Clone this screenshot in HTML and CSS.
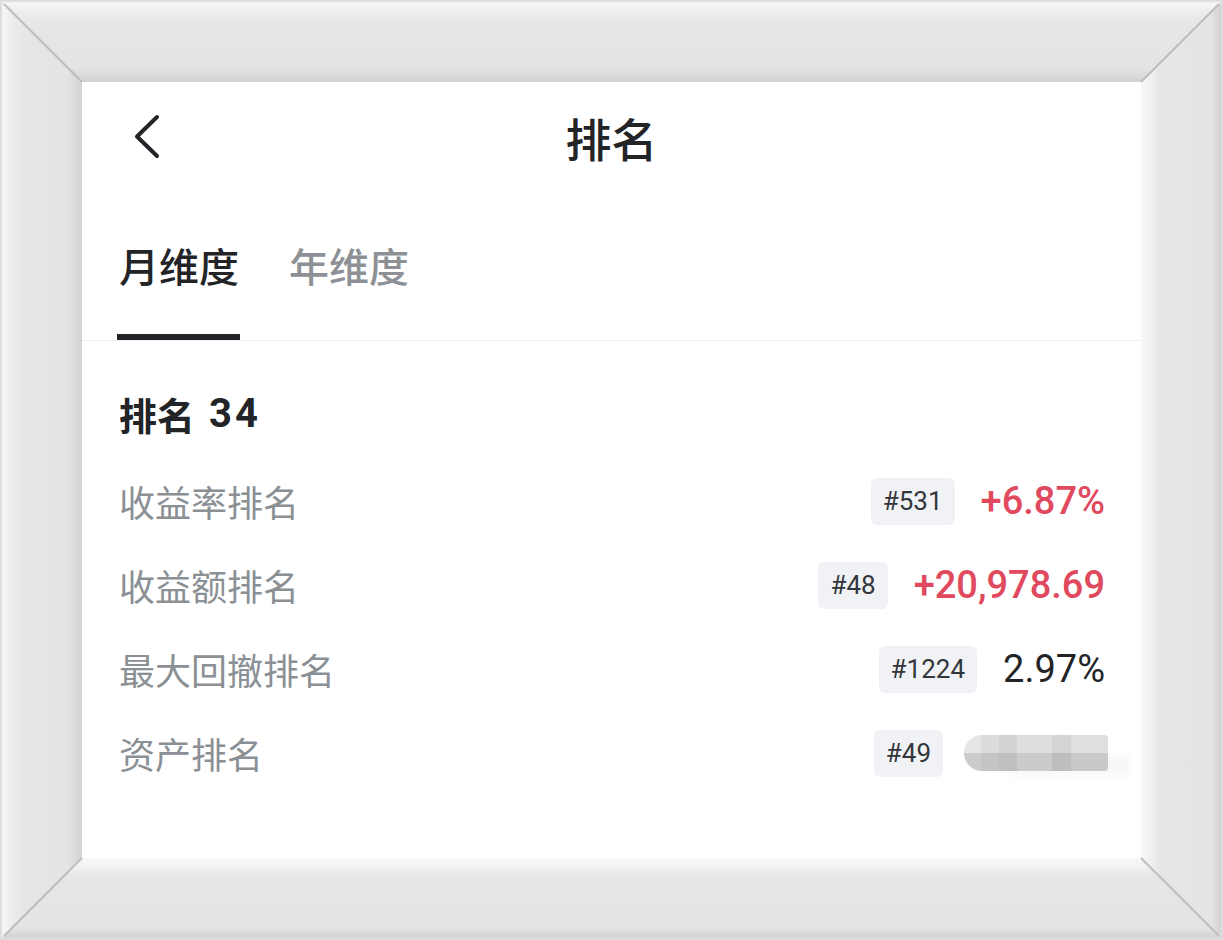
FILE: index.html
```html
<!DOCTYPE html>
<html lang="zh-CN">
<head>
<meta charset="utf-8">
<title>排名</title>
<link rel="stylesheet" href="styles.css">
</head>
<body>
<div class="frame">
  <svg class="frame-bg" width="1223" height="940" viewBox="0 0 1223 940" aria-hidden="true">
    <defs>
      <linearGradient id="gTop" gradientUnits="userSpaceOnUse" x1="0" y1="0" x2="0" y2="82">
        <stop offset="0" stop-color="#d6d6d6"/>
        <stop offset="0.04" stop-color="#f6f6f6"/>
        <stop offset="0.16" stop-color="#ececec"/>
        <stop offset="0.3" stop-color="#e6e6e6"/>
        <stop offset="0.82" stop-color="#e4e4e4"/>
        <stop offset="0.97" stop-color="#d6d6d6"/>
        <stop offset="1" stop-color="#d2d2d2"/>
      </linearGradient>
      <linearGradient id="gLeft" gradientUnits="userSpaceOnUse" x1="0" y1="0" x2="82" y2="0">
        <stop offset="0" stop-color="#d6d6d6"/>
        <stop offset="0.04" stop-color="#f6f6f6"/>
        <stop offset="0.16" stop-color="#ececec"/>
        <stop offset="0.3" stop-color="#e6e6e6"/>
        <stop offset="0.82" stop-color="#e4e4e4"/>
        <stop offset="0.97" stop-color="#d6d6d6"/>
        <stop offset="1" stop-color="#d2d2d2"/>
      </linearGradient>
      <linearGradient id="gRight" gradientUnits="userSpaceOnUse" x1="1141" y1="0" x2="1223" y2="0">
        <stop offset="0" stop-color="#f8f8f8"/>
        <stop offset="0.1" stop-color="#f2f2f2"/>
        <stop offset="0.22" stop-color="#e6e6e6"/>
        <stop offset="0.85" stop-color="#e4e4e4"/>
        <stop offset="0.96" stop-color="#d4d4d4"/>
        <stop offset="1" stop-color="#e0e0e0"/>
      </linearGradient>
      <linearGradient id="gBottom" gradientUnits="userSpaceOnUse" x1="0" y1="858" x2="0" y2="940">
        <stop offset="0" stop-color="#f8f8f8"/>
        <stop offset="0.1" stop-color="#f2f2f2"/>
        <stop offset="0.22" stop-color="#e6e6e6"/>
        <stop offset="0.85" stop-color="#e4e4e4"/>
        <stop offset="0.96" stop-color="#d4d4d4"/>
        <stop offset="1" stop-color="#e0e0e0"/>
      </linearGradient>
    </defs>
    <polygon points="0,0 1223,0 1141,82 82,82" fill="url(#gTop)"/>
    <polygon points="0,0 82,82 82,858 0,940" fill="url(#gLeft)"/>
    <polygon points="1223,0 1223,940 1141,858 1141,82" fill="url(#gRight)"/>
    <polygon points="0,940 82,858 1141,858 1223,940" fill="url(#gBottom)"/>
    <g stroke="#bdbdbd" stroke-width="2">
      <line x1="4" y1="4" x2="82" y2="82"/>
      <line x1="1219" y1="4" x2="1141" y2="82"/>
      <line x1="4" y1="936" x2="82" y2="858"/>
      <line x1="1219" y1="936" x2="1141" y2="858"/>
    </g>
  </svg>

  <main class="page">
    <header class="navbar">
      <button class="back" type="button" aria-label="返回">
        <svg width="30" height="48" viewBox="0 0 30 48">
          <path d="M24 4 L4 23.5 L24 43" fill="none" stroke="#222427" stroke-width="4" stroke-linecap="round" stroke-linejoin="round"/>
        </svg>
      </button>
      <h1 class="title">排名</h1>
      <span></span>
    </header>

    <nav class="tabs">
      <div class="tab active"><span class="tab-text">月维度</span><span class="tab-line"></span></div>
      <div class="tab"><span class="tab-text">年维度</span><span class="tab-line"></span></div>
    </nav>

    <section class="content">
      <h2 class="summary">排名<span class="summary-num">34</span></h2>
      <div class="row">
        <span class="label">收益率排名</span>
        <span class="badge">#531</span>
        <span class="value up">+6.87%</span>
      </div>
      <div class="row">
        <span class="label">收益额排名</span>
        <span class="badge">#48</span>
        <span class="value up">+20,978.69</span>
      </div>
      <div class="row">
        <span class="label">最大回撤排名</span>
        <span class="badge">#1224</span>
        <span class="value">2.97%</span>
      </div>
      <div class="row">
        <span class="label">资产排名</span>
        <span class="badge">#49</span>
        <span class="masked" aria-label="已隐藏">
          <span class="cell c1"></span><span class="cell c2"></span><span class="cell c3"></span><span class="cell c4"></span><span class="cell c5"></span><span class="cell c6"></span>
          <span class="cell d1"></span><span class="cell d2"></span><span class="cell d3"></span><span class="cell d4"></span><span class="cell d5"></span><span class="cell d6"></span>
        </span>
      </div>
    </section>
  </main>
</div>
</body>
</html>
```

FILE: styles.css
```css
* { box-sizing: border-box; }

html, body {
  margin: 0;
  padding: 0;
  background: #e6e6e6;
}

body {
  width: 1223px;
  height: 940px;
  overflow: hidden;
  font-family: "Noto Sans CJK SC", "Noto Sans", sans-serif;
  color: #222427;
}

.frame {
  position: relative;
  width: 1223px;
  height: 940px;
  padding: 82px;
}

.frame-bg {
  position: absolute;
  left: 0;
  top: 0;
  z-index: 0;
  display: block;
}

.page {
  position: relative;
  z-index: 1;
  width: 1059px;
  height: 776px;
  background: #ffffff;
  display: flex;
  flex-direction: column;
}

/* Navbar */
.navbar {
  height: 110px;
  display: grid;
  grid-template-columns: 1fr auto 1fr;
  align-items: center;
}

.back {
  justify-self: start;
  margin-left: 51px;
  padding: 0;
  border: 0;
  background: none;
  display: flex;
  align-items: center;
  height: 48px;
}

.back svg { display: block; }

.title {
  margin: 0;
  font-size: 46px;
  line-height: 56px;
  font-weight: 500;
  color: #222427;
  letter-spacing: 0;
}

/* Tabs */
.tabs {
  display: flex;
  gap: 50px;
  padding-left: 37px;
  height: 149px;
  border-bottom: 1px solid #eeeff1;
}

.tab {
  display: flex;
  flex-direction: column;
  padding-top: 49px;
}

.tab-text {
  font-size: 40px;
  line-height: 48px;
  font-weight: 500;
  color: #8d9196;
}

.tab-line {
  margin-top: 45px;
  height: 6px;
  margin-left: -2px;
  margin-right: -1px;
  background: transparent;
}

.tab.active .tab-text { color: #222427; }
.tab.active .tab-line { background: #222427; }

/* Content */
.content {
  padding: 0 36px 0 37px;
}

.summary {
  margin: 48px 0 20px;
  height: 50px;
  font-size: 38px;
  line-height: 50px;
  font-weight: 700;
  color: #222427;
  display: flex;
  align-items: center;
}

.summary-num {
  margin-left: 14px;
  font-family: Roboto, "Noto Sans", sans-serif;
  font-size: 40px;
  line-height: 50px;
  font-weight: 700;
  letter-spacing: 3px;
}

.row {
  height: 84px;
  display: flex;
  align-items: center;
  gap: 26px;
}

.label {
  flex: 1;
  font-size: 36px;
  line-height: 48px;
  color: #8b9095;
}

.badge {
  height: 47px;
  padding: 0 12px;
  border-radius: 6px;
  background: #f1f2f6;
  font-family: Roboto, "Noto Sans", sans-serif;
  font-size: 26px;
  line-height: 47px;
  color: #33363a;
}

.value {
  font-family: Roboto, "Noto Sans", sans-serif;
  font-size: 38px;
  line-height: 48px;
  color: #222427;
}

.value.up { color: #e0495e; font-weight: 500; }

.masked {
  margin-left: -5px;
  margin-right: -3px;
  width: 144px;
  height: 36px;
  display: grid;
  grid-template-columns: 17px 18px 18px 35px 19px 37px;
  grid-template-rows: 18px 18px;
  border-radius: 18px 4px 4px 18px;
  overflow: hidden;
  box-shadow: 30px 12px 8px -8px rgba(244, 244, 244, 0.7);
}

.cell { display: block; }
.c1 { background: #e6e6e6; }
.c2 { background: #dcdcdc; }
.c3 { background: #d2d2d2; }
.c4 { background: #dedede; }
.c5 { background: #d4d4d4; }
.c6 { background: #dfdfdf; }
.d1 { background: #cbcbcb; }
.d2 { background: #c5c5c5; }
.d3 { background: #bfbfbf; }
.d4 { background: #cbcbcb; }
.d5 { background: #bebebe; }
.d6 { background: #c9c9c9; }
```
